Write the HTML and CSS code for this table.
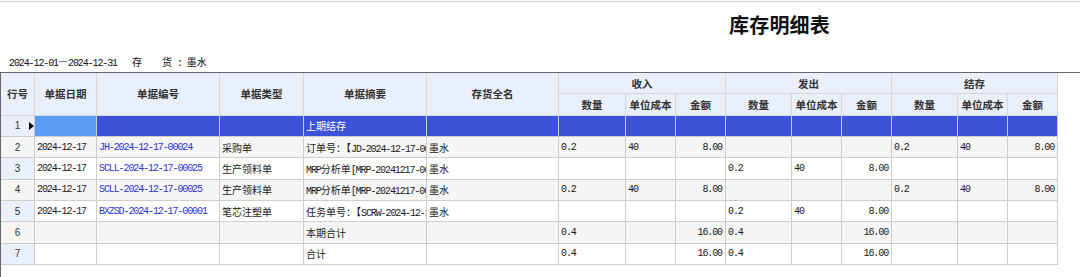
FILE: index.html
```html
<!DOCTYPE html>
<html lang="zh-CN">
<head>
<meta charset="utf-8">
<title>库存明细表</title>
<link rel="stylesheet" href="styles.css">
</head>
<body>
<div class="page">
  <div class="title">库存明细表</div>
  <div class="info"><span class="n">2024-12-01</span>—<span class="n">2024-12-31</span><span class="k1">存</span><span class="k2">货</span><span class="n"> : </span>墨水</div>
  <div class="grid">
    <table class="t">
      <colgroup>
        <col class="w34"><col class="w62"><col class="w123"><col class="w84"><col class="w123"><col class="w132">
        <col class="w67"><col class="w50"><col class="w50">
        <col class="w66"><col class="w50"><col class="w50">
        <col class="w66"><col class="w50"><col class="w50">
      </colgroup>
      <thead>
        <tr>
          <th rowspan="2">行号</th>
          <th rowspan="2">单据日期</th>
          <th rowspan="2">单据编号</th>
          <th rowspan="2">单据类型</th>
          <th rowspan="2">单据摘要</th>
          <th rowspan="2">存货全名</th>
          <th colspan="3">收入</th>
          <th colspan="3">发出</th>
          <th colspan="3">结存</th>
        </tr>
        <tr>
          <th>数量</th><th>单位成本</th><th>金额</th>
          <th>数量</th><th>单位成本</th><th>金额</th>
          <th>数量</th><th>单位成本</th><th>金额</th>
        </tr>
      </thead>
      <tbody>
        <tr class="sel">
          <td class="rn">1<i class="arrow"></i></td>
          <td class="cur"></td><td></td><td></td><td>上期结存</td><td></td>
          <td></td><td></td><td></td><td></td><td></td><td></td><td></td><td></td><td></td>
        </tr>
        <tr class="odd">
          <td class="rn">2</td>
          <td class="n">2024-12-17</td>
          <td class="n doc">JH-2024-12-17-00024</td>
          <td>采购单</td>
          <td>订单号：【<span class="n">JD-2024-12-17-00024</span>】</td>
          <td>墨水</td>
          <td class="n">0.2</td><td class="n">40</td><td class="n r">8.00</td>
          <td></td><td></td><td></td>
          <td class="n">0.2</td><td class="n">40</td><td class="n r">8.00</td>
        </tr>
        <tr>
          <td class="rn">3</td>
          <td class="n">2024-12-17</td>
          <td class="n doc">SCLL-2024-12-17-00025</td>
          <td>生产领料单</td>
          <td><span class="n">MRP</span>分析单<span class="n">[MRP-20241217-0001]</span></td>
          <td>墨水</td>
          <td></td><td></td><td></td>
          <td class="n">0.2</td><td class="n">40</td><td class="n r">8.00</td>
          <td></td><td></td><td></td>
        </tr>
        <tr class="odd">
          <td class="rn">4</td>
          <td class="n">2024-12-17</td>
          <td class="n doc">SCLL-2024-12-17-00025</td>
          <td>生产领料单</td>
          <td><span class="n">MRP</span>分析单<span class="n">[MRP-20241217-0001]</span></td>
          <td>墨水</td>
          <td class="n">0.2</td><td class="n">40</td><td class="n r">8.00</td>
          <td></td><td></td><td></td>
          <td class="n">0.2</td><td class="n">40</td><td class="n r">8.00</td>
        </tr>
        <tr>
          <td class="rn">5</td>
          <td class="n">2024-12-17</td>
          <td class="n doc">BXZSD-2024-12-17-00001</td>
          <td>笔芯注塑单</td>
          <td>任务单号：【<span class="n">SCRW-2024-12-17-00001</span>】</td>
          <td>墨水</td>
          <td></td><td></td><td></td>
          <td class="n">0.2</td><td class="n">40</td><td class="n r">8.00</td>
          <td></td><td></td><td></td>
        </tr>
        <tr class="odd">
          <td class="rn">6</td>
          <td></td><td></td><td></td>
          <td>本期合计</td>
          <td></td>
          <td class="n">0.4</td><td></td><td class="n r">16.00</td>
          <td class="n">0.4</td><td></td><td class="n r">16.00</td>
          <td></td><td></td><td></td>
        </tr>
        <tr>
          <td class="rn">7</td>
          <td></td><td></td><td></td>
          <td>合计</td>
          <td></td>
          <td class="n">0.4</td><td></td><td class="n r">16.00</td>
          <td class="n">0.4</td><td></td><td class="n r">16.00</td>
          <td></td><td></td><td></td>
        </tr>
      </tbody>
    </table>
  </div>
</div>
</body>
</html>
```

FILE: styles.css
```css
html, body {
  margin: 0;
  padding: 0;
  background: #ffffff;
}

body {
  font-family: "Noto Sans CJK SC", "Liberation Sans", sans-serif;
  font-size: 10px;
  color: #1a1a1a;
}

.page {
  margin-top: 1px;
  border-top: 1px solid #cfcfcf;
  height: 275px;
  overflow: hidden;
}

.title {
  margin-top: 13px;
  padding-left: 729px;
  font-size: 20px;
  line-height: 20px;
  font-weight: 700;
  color: #111;
  letter-spacing: 0.2px;
}

.info {
  margin-top: 21px;
  padding-left: 9px;
  height: 12px;
  line-height: 12px;
  font-size: 10px;
  white-space: nowrap;
  color: #111;
}

.n {
  font-family: "Liberation Mono", "Noto Sans CJK SC", monospace;
  letter-spacing: -1.1px;
}

.k1 {
  margin-left: 15px;
}

.k2 {
  margin-left: 20px;
}

.grid {
  margin-top: 4px;
  border-top: 1px solid #666;
  border-left: 1px solid #666;
  height: 220px;
}

.t {
  border-collapse: separate;
  border-spacing: 0;
  table-layout: fixed;
  width: 1057px;
}

.w34 { width: 34px; }
.w62 { width: 62px; }
.w123 { width: 123px; }
.w84 { width: 84px; }
.w132 { width: 132px; }
.w67 { width: 67px; }
.w66 { width: 66px; }
.w50 { width: 50px; }

.t tr {
  height: 21.33px;
}

.t th,
.t td {
  border-right: 1px solid #cdcdcd;
  border-bottom: 1px solid #cdcdcd;
  padding: 0 2px;
  white-space: nowrap;
  overflow: hidden;
  vertical-align: middle;
}

.t th {
  background: #eaf0fb;
  font-weight: 700;
  font-size: 10.5px;
  color: #333;
  text-align: center;
  border-right-color: #d4d6dc;
  border-bottom-color: #d4d6dc;
}

.t td {
  font-size: 10px;
  text-align: left;
  background: #ffffff;
}

.t tr.odd td {
  background: #f5f5f5;
}

.t td.rn {
  background: #eaf0fb;
  text-align: center;
  font-family: "Liberation Sans", sans-serif;
  color: #333;
  padding: 0;
}

.t td.r {
  text-align: right;
  padding-right: 3px;
}

.t td.doc {
  color: #2b33d6;
}

.t tr.sel td {
  background: #3c52d9;
  color: #fff;
}

.t tr.sel td.rn {
  background: #eaf0fb;
  color: #333;
}

.t tr.sel td.cur {
  background: #5b9cf7;
}

.arrow {
  display: inline-block;
  width: 0;
  height: 0;
  border-top: 4px solid transparent;
  border-bottom: 4px solid transparent;
  border-left: 5px solid #000;
  margin-left: 9px;
  margin-right: -14px;
  vertical-align: -1px;
}
```
